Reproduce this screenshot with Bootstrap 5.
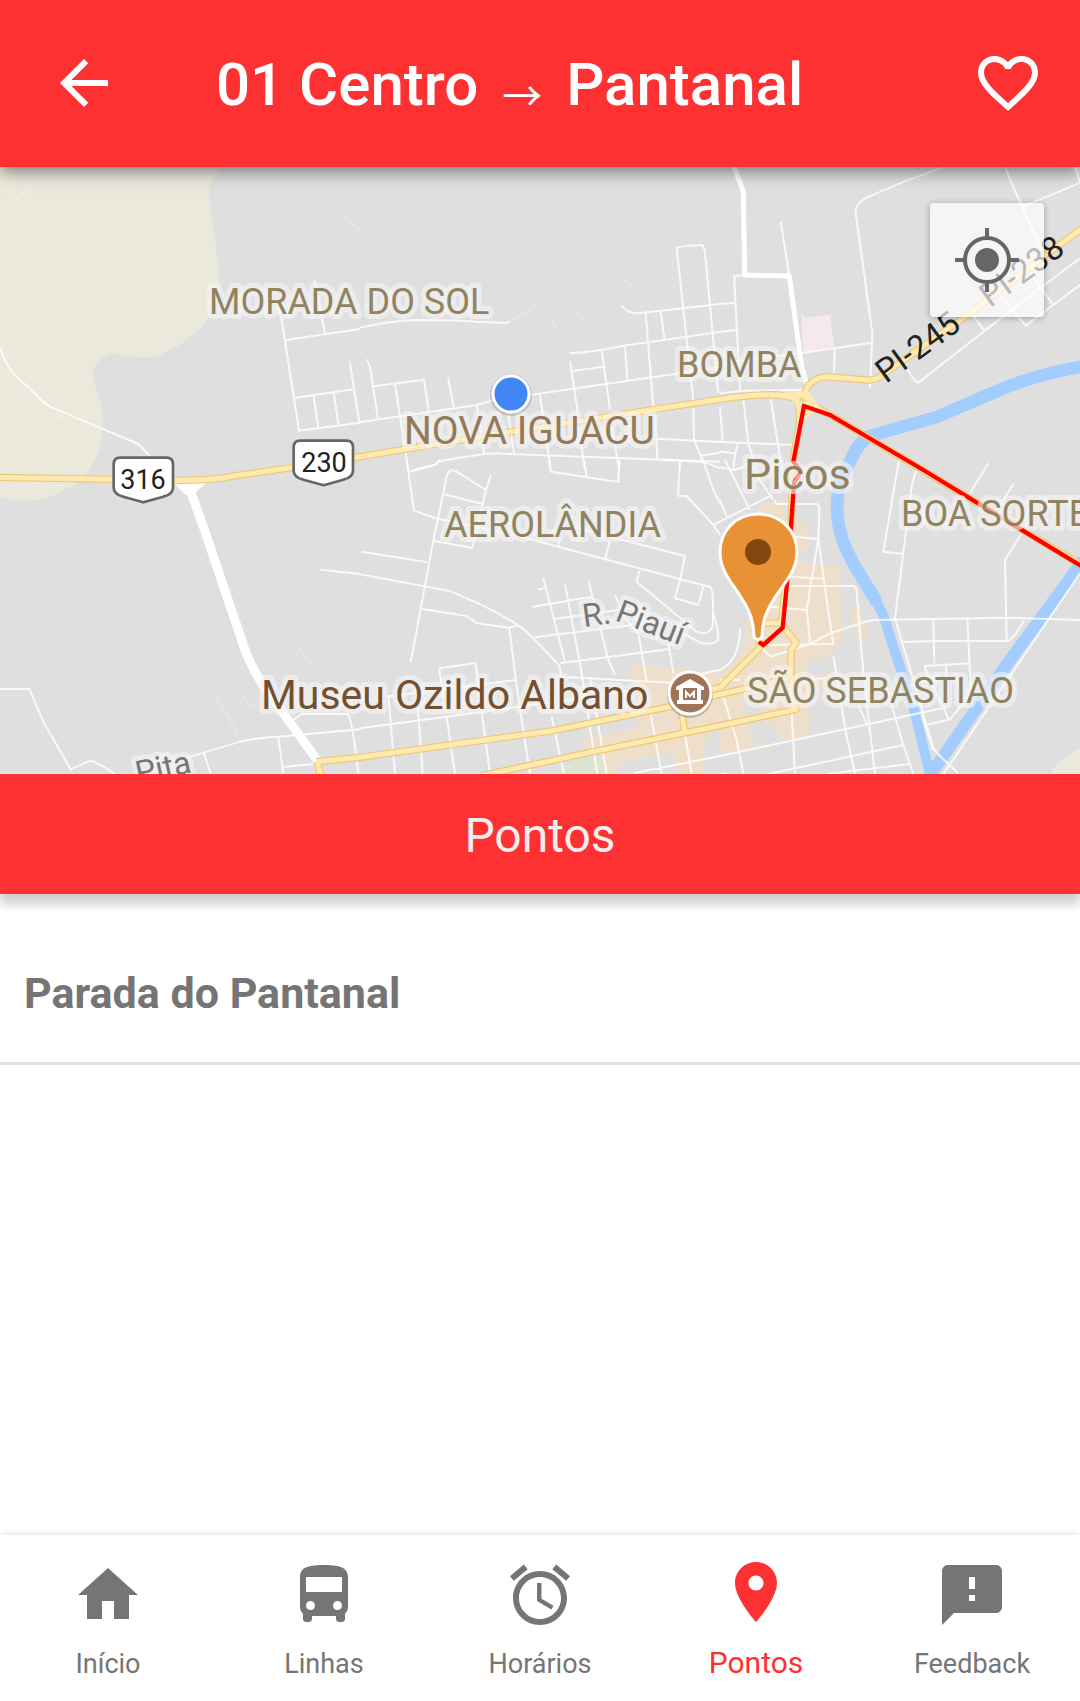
<!DOCTYPE html>
<html lang="pt-BR">
<head>
<meta charset="utf-8">
<meta name="viewport" content="width=device-width, initial-scale=1">
<title>01 Centro → Pantanal</title>
<link rel="stylesheet" href="https://cdn.jsdelivr.net/npm/bootstrap@5.3.0/dist/css/bootstrap.min.css">
<script src="https://cdn.jsdelivr.net/npm/bootstrap@5.3.0/dist/js/bootstrap.bundle.min.js"></script>
<style>
  :root { --brand: #fd3132; --muted: #757575; }
  body { font-family: Roboto, "Liberation Sans", sans-serif; background: #fff; color: var(--muted); }
  .ico { width: 72px; height: 72px; fill: currentColor; display: block; }
  .topbar { background: var(--brand); color: #fff; height: 167px; padding: 0 36px 2px 48px; box-shadow: 0 4px 16px rgba(0,0,0,.5); z-index: 2; }
  .topbar h1 { font-size: 60px; line-height: 72px; font-weight: 500; padding: 4px 0 0 96px; }
  .topbar h1 span { font-family: "Noto Sans CJK JP", "DejaVu Sans", sans-serif; font-weight: 400; font-size: 40px; line-height: 1; padding: 0 9px; vertical-align: -6px; }
  .map-pane { background: #dfdfdf; z-index: 1; }
  .map-pane > svg { display: block; width: 100%; height: auto; }
  .locate { top: 36px; right: 36px; width: 114px; height: 114px; border-radius: 4px; background: rgba(255,255,255,.68); box-shadow: 0 1px 6px rgba(0,0,0,.3); color: #666; }
  .locate svg { width: 64px; height: 64px; }
  .section-title { background: var(--brand); color: #f1eeee; font-size: 48px; line-height: 116px; padding-top: 4px; font-weight: 400; box-shadow: 0 10px 10px rgba(0,0,0,.2); z-index: 1; }
  .stop { padding: 69px 24px 39px; font-size: 43px; line-height: 60px; font-weight: 700; color: var(--muted); border-bottom: 3px solid #e0e0e0; }
  .tabbar { height: 166px; background: #fff; box-shadow: 0 -1px 6px rgba(0,0,0,.12); }
  .tabbar a { color: var(--muted); font-size: 27px; line-height: 36px; padding-top: 24px; text-decoration: none; }
  .tabbar a.active { color: var(--brand); font-size: 30px; padding-top: 21px; }
  .tabbar .ico { margin-bottom: 15px; }
  .tabbar a.active .ico { margin-bottom: 17px; }
  .st path { fill: none; stroke: #fff; stroke-width: 6; stroke-linejoin: round; opacity: .8; }
  .st path.faint { stroke-width: 3; opacity: .4; }
  .place { fill: #91835f; font-size: 36px; }
  .halo text { paint-order: stroke; stroke: rgba(245,245,245,.65); stroke-width: 10px; stroke-linejoin: round; }
</style>
</head>
<body class="d-flex flex-column min-vh-100">

<header class="topbar d-flex align-items-center position-relative">
  <button type="button" class="btn p-0 border-0 text-white" aria-label="Voltar">
    <svg class="ico" viewBox="0 0 24 24"><path d="M20 11H7.83l5.59-5.59L12 4l-8 8 8 8 1.41-1.41L7.83 13H20v-2z"/></svg>
  </button>
  <h1 class="m-0 flex-grow-1 text-nowrap">01 Centro <span>→</span> Pantanal</h1>
  <button type="button" class="btn p-0 border-0 text-white" aria-label="Favoritar">
    <svg class="ico" viewBox="0 0 24 24"><path d="M16.5 3c-1.74 0-3.41.81-4.5 2.09C10.91 3.81 9.24 3 7.5 3 4.42 3 2 5.42 2 8.5c0 3.78 3.4 6.86 8.55 11.54L12 21.35l1.45-1.32C18.6 15.36 22 12.28 22 8.5 22 5.42 19.58 3 16.5 3zm-4.4 15.55l-.1.1-.1-.1C7.14 14.24 4 11.39 4 8.5 4 6.5 5.5 5 7.5 5c1.54 0 3.04.99 3.57 2.36h1.87C13.46 5.99 14.96 5 16.5 5c2 0 3.5 1.5 3.5 3.5 0 2.89-3.14 5.74-7.9 10.05z"/></svg>
  </button>
</header>

<main class="flex-grow-1 d-flex flex-column">
  <div class="map-pane position-relative">
    <svg viewBox="0 0 1080 607" role="img" aria-label="Mapa de Picos">
      <g transform="scale(.333333)">
        <!-- land cover -->
        <path fill="#ebe9dc" d="M0 0H658L626 64Q628 110 635 149Q656 290 657 349L622 459Q560 535 470 566Q420 578 340 559Q285 572 279 620Q281 650 300 700Q318 770 300 840Q270 935 200 965Q140 1003 75 1001Q30 1000 0 988Z"/>
        <path fill="#ebe9dc" d="M3150 1821Q3190 1760 3240 1745V1821Z"/>
        <path fill="#f6e9ee" d="M2403 437L2413 451L2490 444L2503 539L2410 557Z"/>
        <g fill="#efdfca">
          <path d="M1888 1491L2040 1507L2160 1519V1679L2110 1729L2115 1821H2030L2020 1754L1860 1784V1821H1815L1800 1759H1760L1748 1717L1912 1684Z"/>
          <path d="M2280 1009L2355 999L2360 1069H2422L2418 1159H2380V1184L2520 1197L2525 1429L2460 1479H2422V1525L2510 1519L2500 1569L2425 1579L2428 1714L2338 1721L2330 1669L2250 1679L2258 1744L2170 1759L2160 1729V1525Q2260 1450 2235 1379L2255 1310Z"/>
          <path d="M2548 1334L2580 1320L2605 1407L2572 1417Z"/>
        </g>
        <path fill="#dbe6d0" d="M1685 1794L1800 1764L1815 1821H1692Z"/>
        <path fill="#dfdfdb" d="M2225 1590L2290 1580L2305 1730L2258 1740Z"/>
        <!-- river -->
        <g fill="none" stroke="#a3ccff" stroke-linejoin="round">
          <path stroke-width="38" d="M3250 598Q3120 620 3010 664L2810 750L2620 804Q2575 820 2553 879Q2505 955 2512 1039Q2515 1110 2560 1189L2630 1305"/>
          <path stroke-width="30" d="M2625 1295L2650 1345L2680 1439L2740 1619L2790 1821"/>
          <path stroke-width="36" d="M3250 1179L3030 1479L2790 1825"/>
        </g>
        <!-- streets, north west -->
        <g class="st" transform="translate(0 -21)">
          <path d="M0 560Q10 600 38 638L130 725L150 740L415 852L450 888"/>
          <path d="M832 430L845 480L897 812L1080 788M858 540L1080 507M943 358L975 520M882 714L1060 688M940 705L955 803M1001 695L1015 795M1049 603L1078 788"/>
          <path class="faint" d="M38 130L60 105L92 84M120 798L190 766M800 106L816 92M796 148L806 157M832 98L852 74M1030 171L1080 210"/>
        </g>
        <!-- streets, north -->
        <g class="st" transform="translate(1080 -21)">
          <path d="M0 503Q100 482 160 480Q300 480 345 485L440 489L450 483"/>
          <path d="M20 598L30 620L54 778M42 679L192 659L207 760M105 672L145 930M0 787L350 735L395 722M264 652L282 745M350 735L372 880M510 705L980 637L1080 620M445 765L462 880M540 705L572 930"/>
          <path d="M785 436Q800 460 835 460L1080 432M628 580Q700 577 800 556L1080 516M950 265Q955 258 1025 255Q1035 260 1036 290L1075 700M950 265L1000 720M857 460L880 740M902 455L914 540M795 556L802 660M725 570L750 750M630 603L655 770M640 633L730 620M655 800L675 930M755 800L778 930M885 765L892 895M1000 745L1002 840L1030 905"/>
          <path d="M160 930L225 914L235 904L385 880L1080 905M890 836L1080 846M1020 887L1080 878M960 905V930"/>
          <path class="faint" d="M790 357L848 404M757 400L780 423M633 444L672 475M450 485L535 435M574 477L595 510M16 720L38 746"/>
        </g>
        <!-- streets, north east -->
        <g class="st" transform="translate(2160 -21)">
          <path d="M182 185L208 348M42 345L60 690M70 345L48 348L42 360M0 432L42 429M0 515L50 510M0 610L250 578L457 548M670 22L545 68L440 113Q415 125 406 150L457 520L450 685M345 562L342 640"/>
          <path d="M856 22L875 70L960 260M905 142L1080 68M1065 22L1080 68M550 600Q570 650 592 668Q605 665 620 648L900 430L1080 295M1080 375L917 497L830 390M750 455L793 512M925 330L1000 435"/>
          <path d="M0 700L70 692L250 690M70 715L85 850L110 930M152 715L175 860L185 930M0 740L8 845M0 846L220 855M0 875L45 880L40 930M55 850L45 885"/>
        </g>
        <!-- streets, south west -->
        <g class="st" transform="translate(0 879)">
          <path d="M0 687H88L130 785L212 928L270 902Q290 905 345 942M962 329L1080 342M555 895L720 845Q770 833 835 830L1080 808M612 880L632 942M835 830L850 942M850 921L940 912M880 780L905 762H1045Q1060 800 1075 942"/>
          <path class="faint" d="M870 532L932 608M645 708L715 822M720 700L752 740L780 726M828 375L837 367"/>
        </g>
        <!-- streets, south -->
        <g class="st" transform="translate(1080 879)">
          <path d="M140 0L162 152L220 173L490 232L600 262L1052 382Q1062 400 1058 500Q1045 530 1010 515L830 365L838 332"/>
          <path d="M148 35L228 14L240 0M393 45L378 90L337 264L220 242M378 90L290 35Q268 22 260 50L220 242L152 608M250 102L370 133M4 275L200 306M0 343L265 392Q400 445 480 500Q510 520 600 620L603 650L930 668M182 446L320 468L352 490L448 503L475 495M568 0L572 35L775 66L778 0M672 0L680 48"/>
          <path d="M905 0L1030 5L1080 25M960 0L954 107L980 108L1060 195L1080 225M1060 195L1080 185M1030 5L1060 90L1080 130M640 200L750 230L975 288L960 360L945 415L1015 435L1030 380M750 240L735 300M600 235L594 262M1060 460Q1075 510 1075 540Q1060 555 1025 550L950 510"/>
          <path d="M549 352L615 605M535 388L558 384M518 440L695 410M585 477L840 440M525 532L820 495M600 610L930 567M686 363L745 600L765 645M615 373L660 610L712 942M765 406L800 480L835 520L860 665M925 550L940 640M448 503L470 680L510 942M238 625L347 609L355 680L390 942M238 625L250 720M0 805L300 765L830 690M85 705L105 942M170 690L188 942M260 770L285 942M575 770L612 942M690 650L740 942M870 750L905 942M80 710L470 660M960 735L995 942M820 940L1080 888M930 690Q1000 640 1080 630"/>
        </g>
        <!-- streets, south east -->
        <g class="st" transform="translate(2160 879)">
          <path d="M0 22L45 30L85 15M15 0L90 150M80 0L160 120M0 185L155 105M0 120L20 170M165 120L168 132L290 132Q298 135 298 150L295 235L320 420L340 552L130 555M220 230L295 237L260 450L270 548M215 350L315 357M210 378L400 378Q410 380 410 395L430 640L465 942M155 440L258 450M340 587L378 820L405 942M120 560L152 590L270 552L330 520L430 487L460 480L860 473L1080 480M0 630Q60 600 60 505"/>
          <path d="M0 888L680 742M0 942L20 940M145 942L550 855M320 942L570 912M215 755L225 942M10 710L50 840L70 942M415 735L440 790M500 685L550 855L580 942M230 660L320 655M0 660H60"/>
          <path d="M537 0L490 275L550 282M590 30Q575 60 570 120L525 475L640 865Q660 890 715 940M805 10L750 100M880 72L820 170M930 180L855 300L860 543M548 546L640 543H865L885 525L912 483M640 475L643 610M742 475L750 640Q760 700 730 730L690 778L620 795M612 618L750 610M612 618L685 775M678 612V690M605 765L640 870M570 680L660 645"/>
          <path d="M1080 340L670 942"/>
        </g>
        <!-- avenues -->
        <g fill="none" stroke="#fff" stroke-linejoin="round">
          <path stroke-width="15" d="M2200 -5L2230 74L2234 324L2368 327L2405 599L2422 659"/>
          <path stroke-width="27" d="M565 955L610 1079L735 1449Q750 1490 785 1549L955 1784"/>
        </g>
        <path fill="#fff" d="M520 946H620L580 982H553Z"/>
        <!-- highways: casing, then fill -->
        <g fill="none" stroke="#e9ca78" stroke-width="22" stroke-linejoin="round">
          <path d="M-10 931L340 937Q620 947 700 927L880 901L1080 869L1530 795L1950 729L2160 697Q2270 680 2340 684L2405 699L2425 654Q2450 630 2480 629L2600 639Q2625 640 2640 629L2900 446L3130 269L3250 181"/>
          <path d="M2405 699L2490 743L3250 1198"/>
          <path d="M2395 700L2400 760L2379 879L2373 1079L2345 1367L2295 1369M2345 1374L2388 1427L2373 1449V1599L2388 1627L2160 1676L1780 1754L1450 1825"/>
          <path d="M2278 1420V1444L2160 1562L2100 1575M950 1784L1080 1771L1660 1691L2010 1619L2160 1582L2370 1534M2045 1629L2055 1699M952 1784L962 1825"/>
        </g>
        <g fill="none" stroke="#ffe9ae" stroke-width="15" stroke-linejoin="round">
          <path d="M-10 931L340 937Q620 947 700 927L880 901L1080 869L1530 795L1950 729L2160 697Q2270 680 2340 684L2405 699L2425 654Q2450 630 2480 629L2600 639Q2625 640 2640 629L2900 446L3130 269L3250 181M2405 699L2490 743L3250 1198"/>
          <path d="M2395 700L2400 760L2379 879L2373 1079L2345 1367L2295 1369M2345 1374L2388 1427L2373 1449V1599L2388 1627L2160 1676L1780 1754L1450 1825M2278 1420V1444L2160 1562L2100 1575M950 1784L1080 1771L1660 1691L2010 1619L2160 1582L2370 1534M2045 1629L2055 1699M952 1784L962 1825"/>
        </g>
        <path fill="#ffe9ae" d="M2340 678L2425 672L2460 720L2400 770L2385 706Z"/>
        <circle cx="2405" cy="698" r="6" fill="#dfdfd0" stroke="#e9ca78" stroke-width="3"/>
        <!-- bus route -->
        <path fill="none" stroke="#f00" stroke-width="13" d="M3250 1201L2770 909L2490 744L2412 717L2380 884L2403 914L2382 947L2373 1079L2360 1259L2348 1382L2290 1434L2276 1425"/>
        <!-- road shields -->
        <g fill="#fff" stroke="#666" stroke-width="8" stroke-linejoin="round">
          <path d="M361 872H499Q519 872 519 892V962Q519 982 490 989L430 1006L370 989Q341 982 341 962V892Q341 872 361 872Z"/>
          <path d="M901 821H1039Q1059 821 1059 841V911Q1059 931 1030 938L971 955L910 938Q881 931 881 911V841Q881 821 901 821Z"/>
        </g>
      </g>
      <!-- labels -->
      <g fill="#222" font-size="27" text-anchor="middle">
        <text x="143" y="322">316</text>
        <text x="324" y="305">230</text>
      </g>
      <g class="halo">
        <text class="place" x="209" y="147">MORADA DO SOL</text>
        <text class="place" x="677" y="210">BOMBA</text>
        <text class="place" x="444" y="370">AEROLÂNDIA</text>
        <text class="place" x="901" y="359">BOA SORTE</text>
        <text class="place" x="747" y="536">SÃO SEBASTIAO</text>
        <text x="404" y="277" font-size="39" fill="#94795a">NOVA IGUACU</text>
        <text x="744" y="322" font-size="43" fill="#91835f">Picos</text>
        <text x="261" y="542" font-size="41" fill="#74502f">Museu Ozildo Albano</text>
        <g fill="#777" font-size="32">
          <text transform="translate(584 460) rotate(-8)">R.</text>
          <text transform="translate(614 453) rotate(21)">Piauí</text>
          <text transform="translate(138 617) rotate(-12)">Pita</text>
        </g>
      </g>
      <g fill="#222" font-size="33">
        <text transform="translate(886 217) rotate(-36)">PI-245</text>
        <text transform="translate(990 141) rotate(-36)">PI-238</text>
      </g>
      <!-- museum -->
      <circle cx="690" cy="528" r="23" fill="#000" opacity=".2"/>
      <circle cx="690" cy="526" r="21" fill="#a17458" stroke="#fff" stroke-width="3"/>
      <path fill="#fff" fill-rule="evenodd" d="M690 512L704 520V523H701V533H703V537H677V533H679V523H676V520ZM683 521V533H697V521Z"/>
      <path fill="none" stroke="#fff" stroke-width="2" d="M686 531V525L690 529L694 525V531"/>
      <!-- current position -->
      <circle cx="511" cy="228" r="21" fill="#000" opacity=".14"/>
      <circle cx="511" cy="227" r="18" fill="#4286f5" stroke="#fff" stroke-width="3"/>
      <!-- stop marker -->
      <path d="M758 347C781 347 797 364 797 385C797 411 774 423 765 450Q762 460 762 470Q758 475 754 470Q754 460 751 450C742 423 720 411 720 385C720 364 736 347 758 347Z" fill="#e99235" stroke="#fff" stroke-width="3"/>
      <circle cx="758" cy="385" r="13" fill="#82480f"/>
    </svg>
    <button type="button" class="locate btn border-0 p-0 position-absolute d-flex align-items-center justify-content-center" aria-label="Minha localização">
      <svg viewBox="0 0 64 64" fill="none" stroke="currentColor" stroke-width="4"><circle cx="32" cy="32" r="22"/><circle cx="32" cy="32" r="12" fill="currentColor" stroke="none"/><path d="M32 0V9M32 55V64M0 32H9M55 32H64"/></svg>
    </button>
  </div>

  <h2 class="section-title m-0 text-center position-relative">Pontos</h2>
  <ul class="list-unstyled m-0">
    <li class="stop">Parada do Pantanal</li>
  </ul>
</main>

<nav class="tabbar row row-cols-5 g-0 text-center" aria-label="Principal">
  <a href="#" class="col d-flex flex-column align-items-center"><svg class="ico" viewBox="0 0 24 24"><path d="M10 20v-6h4v6h5v-8h3L12 3 2 12h3v8z"/></svg>Início</a>
  <a href="#" class="col d-flex flex-column align-items-center"><svg class="ico" viewBox="0 0 24 24"><path d="M4 16c0 .88.39 1.67 1 2.22V20c0 .55.45 1 1 1h1c.55 0 1-.45 1-1v-1h8v1c0 .55.45 1 1 1h1c.55 0 1-.45 1-1v-1.78c.61-.55 1-1.34 1-2.22V6c0-3.5-3.58-4-8-4s-8 .5-8 4v10zm3.5 1c-.83 0-1.5-.67-1.5-1.5S6.67 14 7.5 14s1.5.67 1.5 1.5S8.33 17 7.5 17zm9 0c-.83 0-1.5-.67-1.5-1.5s.67-1.5 1.5-1.5 1.5.67 1.5 1.5-.67 1.5-1.5 1.5zm1.5-6H6V6h12v5z"/></svg>Linhas</a>
  <a href="#" class="col d-flex flex-column align-items-center"><svg class="ico" viewBox="0 0 24 24"><path d="M22 5.72l-4.6-3.86-1.29 1.53 4.6 3.86L22 5.72zM7.88 3.39L6.6 1.86 2 5.71l1.29 1.53 4.59-3.85zM12.5 8H11v6l4.75 2.85.75-1.23-4-2.37V8zM12 4c-4.97 0-9 4.03-9 9s4.02 9 9 9c4.97 0 9-4.03 9-9s-4.03-9-9-9zm0 16c-3.87 0-7-3.13-7-7s3.13-7 7-7 7 3.13 7 7-3.13 7-7 7z"/></svg>Horários</a>
  <a href="#" class="col d-flex flex-column align-items-center active" aria-current="page"><svg class="ico" viewBox="0 0 24 24"><path d="M12 2C8.13 2 5 5.13 5 9c0 5.25 7 13 7 13s7-7.75 7-13c0-3.87-3.13-7-7-7zm0 9.5c-1.38 0-2.5-1.12-2.5-2.5s1.12-2.5 2.5-2.5 2.5 1.12 2.5 2.5-1.12 2.5-2.5 2.5z"/></svg>Pontos</a>
  <a href="#" class="col d-flex flex-column align-items-center"><svg class="ico" viewBox="0 0 24 24"><path d="M20 2H4c-1.1 0-1.99.9-1.99 2L2 22l4-4h14c1.1 0 2-.9 2-2V4c0-1.1-.9-2-2-2zm-7 12h-2v-2h2v2zm0-4h-2V6h2v4z"/></svg>Feedback</a>
</nav>
</body>
</html>
